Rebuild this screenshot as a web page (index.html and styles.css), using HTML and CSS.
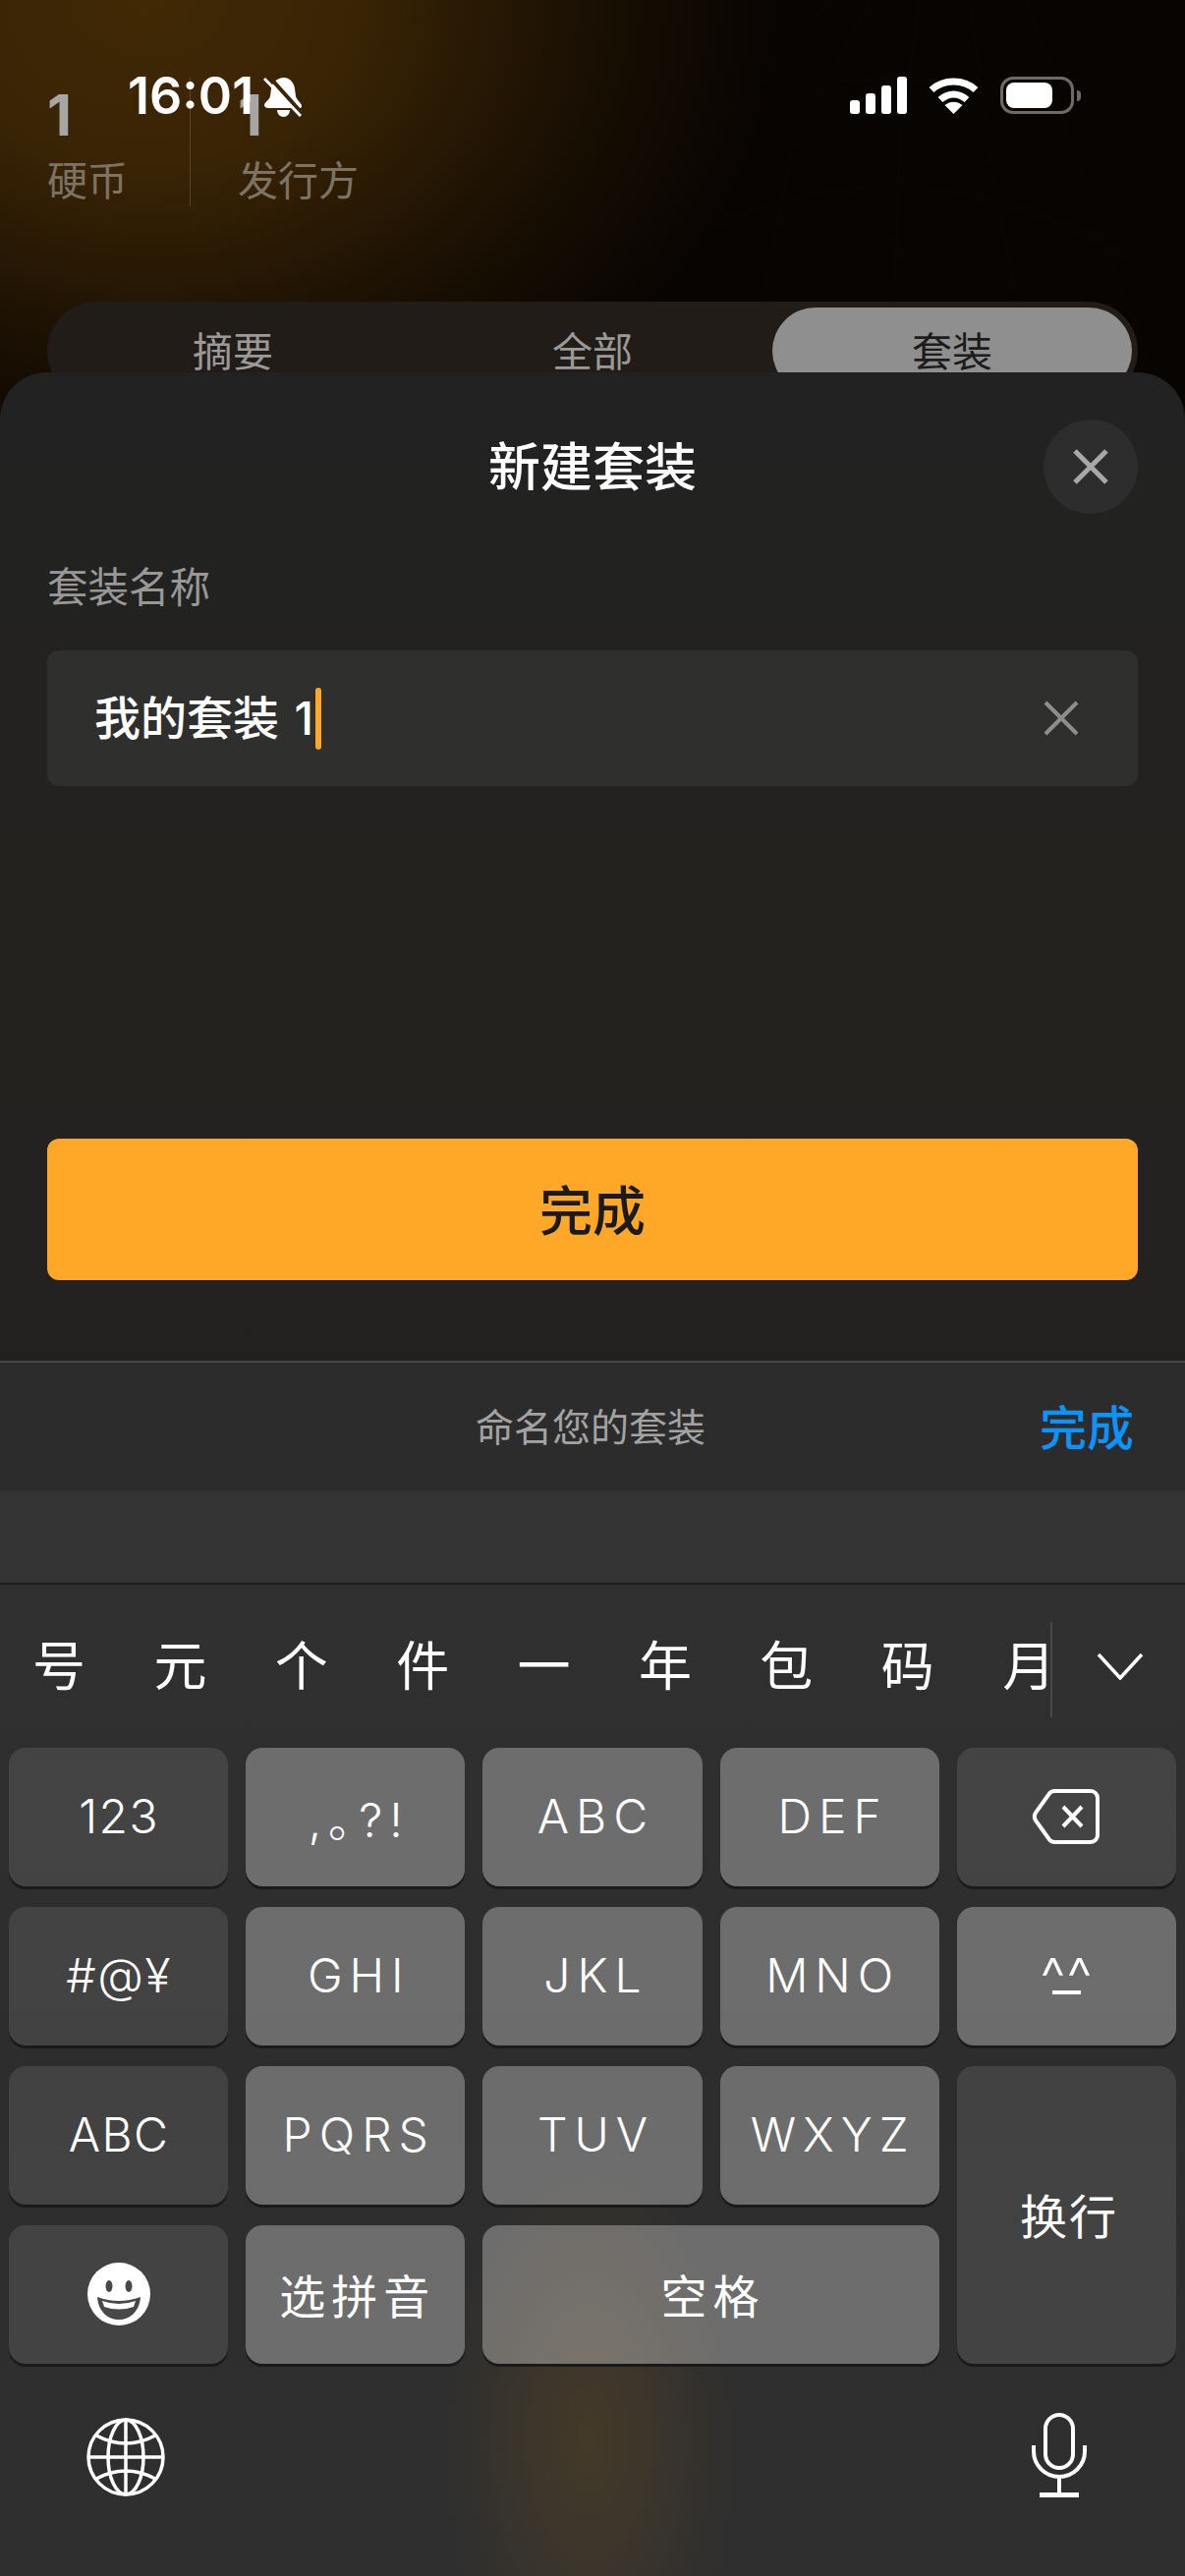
FILE: index.html
```html
<!DOCTYPE html>
<html lang="zh-CN">
<head>
<meta charset="utf-8">
<title>新建套装</title>
<link rel="stylesheet" href="styles.css">
</head>
<body>
<div class="page">
  <section class="backdrop">
    <svg class="web" viewBox="0 0 700 420" width="700" height="420" fill="none" stroke="#fff" stroke-opacity=".012" stroke-width="2">
      <path d="M100 420 200 160 340 0M250 420 300 150 380 0M400 420 410 140 430 0M550 420 500 150 480 0M680 420 590 170 540 0M160 260Q400 120 640 260M220 120Q400 40 600 120"/>
    </svg>
    <div class="stats">
      <div class="stat stat-first"><div class="stat-num">1</div><div class="stat-label">硬币</div></div>
      <div class="stat"><div class="stat-num">1</div><div class="stat-label">发行方</div></div>
    </div>
    <div class="tabs">
      <div class="tab">摘要</div>
      <div class="tab">全部</div>
      <div class="tab tab-on">套装</div>
    </div>
    <div class="status">
      <div class="status-left">
        <span class="time">16:01</span>
        <svg class="bell" viewBox="0 0 40 42" width="40" height="42">
          <path fill="#fff" d="M21 2c6 0 10 5 11 11l1 8c1 4 6 7 6 10 0 2-1 2-3 2H5c-2 0-4-1-4-3 0-3 5-5 6-9l1-8C9 7 14 2 21 2Z"/>
          <path fill="#fff" d="M14 35h13c0 4-3 7-6.500 7S14 39 14 35Z"/>
          <path stroke="#3a2505" stroke-width="4" d="M5 0l34 38"/>
          <path stroke="#fff" stroke-width="3" d="M1 3l37 38"/>
        </svg>
      </div>
      <div class="status-right">
        <svg class="signal" viewBox="0 0 58 38" width="58" height="38" fill="#fff">
          <rect x="0" y="24" width="10" height="14" rx="3"/>
          <rect x="16" y="17" width="10" height="21" rx="3"/>
          <rect x="32" y="9" width="10" height="29" rx="3"/>
          <rect x="48" y="0" width="10" height="38" rx="3"/>
        </svg>
        <svg class="wifi" viewBox="0 0 51 38" width="51" height="38" fill="none" stroke="#fff" stroke-width="7">
          <path d="M3 13.500C15 2 36 2 48 13.500"/>
          <path d="M12 23.500C20 16 31 16 39 23.500"/>
          <path fill="#fff" stroke="none" d="M25.500 38 16.500 29C22 24.500 29 24.500 34.500 29Z"/>
        </svg>
        <div class="battery"><div class="battery-fill"></div></div>
        <div class="battery-nub"></div>
      </div>
    </div>
  </section>

  <section class="sheet">
    <header class="sheet-head">
      <h1 class="sheet-title">新建套装</h1>
      <div class="close">
        <svg viewBox="0 0 36 36" width="36" height="36" fill="none" stroke="#a8a8a8" stroke-width="5"><path d="M2 2l32 32M34 2 2 34"/></svg>
      </div>
    </header>
    <label class="field-label">套装名称</label>
    <div class="field">
      <span class="field-text">我的套装 1</span><span class="caret"></span>
      <svg class="field-clear" viewBox="0 0 36 36" width="36" height="36" fill="none" stroke="#8e8e8e" stroke-width="4"><path d="M2 2l32 32M34 2 2 34"/></svg>
    </div>
    <div class="primary">完成</div>
  </section>

  <section class="accessory">
    <span></span>
    <span class="accessory-hint">命名您的套装</span>
    <span class="accessory-done">完成</span>
  </section>

  <section class="keyboard">
    <div class="kb-top"></div>
    <div class="candidates">
      <div class="cand-list">
        <span>号</span><span>元</span><span>个</span><span>件</span><span>一</span><span>年</span><span>包</span><span>码</span><span>月</span>
      </div>
      <div class="cand-more">
        <svg viewBox="0 0 48 28" width="48" height="28" fill="none" stroke="#fff" stroke-width="3.500"><path d="M2 2l22 24L46 2"/></svg>
      </div>
    </div>
    <div class="keys">
      <div class="key key-dark key-sym">123</div>
      <div class="key key-spaced">,｡?!</div>
      <div class="key key-spaced">ABC</div>
      <div class="key key-spaced">DEF</div>
      <div class="key key-dark">
        <svg viewBox="0 0 70 58" width="70" height="58" fill="none" stroke="#fff" stroke-width="4"><path d="M23 3h37a7 7 0 0 1 7 7v38a7 7 0 0 1-7 7H23a7 7 0 0 1-6-4L4 33a8 8 0 0 1 0-8L17 7a7 7 0 0 1 6-4Z"/><path d="M32 19l19 20M51 19 32 39"/></svg>
      </div>
      <div class="key key-dark key-sym">#@¥</div>
      <div class="key key-spaced">GHI</div>
      <div class="key key-spaced">JKL</div>
      <div class="key key-spaced">MNO</div>
      <div class="key key-face"><span class="face-eyes">^^</span><span class="face-mouth"></span></div>
      <div class="key key-dark key-sym">ABC</div>
      <div class="key key-spaced">PQRS</div>
      <div class="key key-spaced">TUV</div>
      <div class="key key-spaced">WXYZ</div>
      <div class="key key-dark key-return">换行</div>
      <div class="key key-dark">
        <svg viewBox="0 0 64 64" width="64" height="64">
          <circle cx="32" cy="32" r="32" fill="#fff"/>
          <ellipse cx="22" cy="24" rx="3.500" ry="6" fill="#484848"/>
          <ellipse cx="42" cy="24" rx="3.500" ry="6" fill="#484848"/>
          <path fill="#484848" d="M10 35Q32 43 54 35C53 50 43 58 32 58S11 50 10 35Z"/>
          <path fill="#fff" d="M15 39Q32 45 49 39L47 45Q32 50 17 45Z"/>
        </svg>
      </div>
      <div class="key key-cjk">选拼音</div>
      <div class="key key-cjk key-space">空格</div>
    </div>
    <div class="kb-bottom">
      <svg class="globe" viewBox="0 0 80 80" width="80" height="80" fill="none" stroke="#fff" stroke-width="3.500">
        <circle cx="40" cy="40" r="38"/>
        <ellipse cx="40" cy="40" rx="18" ry="38"/>
        <path d="M40 2v76M2 40h76M10 18Q40 34 70 18M10 62Q40 46 70 62"/>
      </svg>
      <svg viewBox="0 0 56 86" width="56" height="86" fill="none" stroke="#fff" stroke-width="4">
        <rect x="14" y="2" width="28" height="54" rx="14"/>
        <path d="M2 33v6a26 26 0 0 0 52 0v-6M28 65v18"/>
        <path stroke-width="5" d="M8 83.500h40"/>
      </svg>
    </div>
  </section>
</div>
</body>
</html>
```
FILE: styles.css
```css
* { box-sizing: border-box; }
html, body { margin: 0; padding: 0; }
body {
  width: 1206px;
  height: 2622px;
  overflow: hidden;
  background: #000;
  font-family: Inter, "Noto Sans CJK SC", sans-serif;
  color: #fff;
}
.page { position: relative; width: 1206px; height: 2622px; display: flex; flex-direction: column; overflow: hidden; }

/* behind the sheet */
.backdrop {
  position: relative;
  flex: none;
  height: 427px;
  padding: 79px 48px 0;
  background:
    radial-gradient(ellipse 640px 520px at 150px 0, #412905 0%, #382305 34%, #1a1003 70%, #080402 100%),
    #060302;
  overflow: hidden;
}
.web { position: absolute; right: 0; top: 0; }
.stats { position: relative; display: flex; height: 131px; }
.stat { padding-top: 14px; }
.stat-first { width: 146px; border-right: 1px solid rgba(255, 255, 255, .16); margin-right: 48px; }
.stat-num { font-size: 58px; line-height: 48px; font-weight: 700; color: #a7a6a4; height: 48px; }
.stat-label { margin-top: 20px; font-size: 41px; line-height: 40px; color: #7d7365; font-family: "Noto Sans CJK SC", sans-serif; }
.tabs {
  position: relative;
  display: grid;
  grid-template-columns: repeat(3, 1fr);
  margin-top: 97px;
  height: 100px;
  padding: 6px;
  border-radius: 50px;
  background: #211c18;
}
.tab {
  display: flex;
  align-items: center;
  justify-content: center;
  padding-bottom: 4px;
  font-size: 41px;
  color: #9a9997;
  border-radius: 44px;
}
.tab-on { background: #8f8f8f; color: #1c1c1c; }

.status {
  position: absolute;
  left: 0;
  right: 0;
  top: 0;
  height: 160px;
  display: flex;
  justify-content: space-between;
}
.status-left { display: flex; align-items: flex-start; gap: 10px; padding: 70px 0 0 130px; }
.time { font-size: 52px; line-height: 56px; font-weight: 600; }
.bell { margin-top: 7px; }
.status-right { display: flex; align-items: flex-start; padding: 78px 106px 0 0; }
.signal { margin-right: 22px; }
.wifi { margin-right: 22px; }
.battery { width: 75px; height: 38px; border: 3px solid #6d6a68; border-radius: 13px; padding: 3px; }
.battery-fill { width: 47px; height: 26px; background: #fff; border-radius: 8px; }
.battery-nub { width: 4px; height: 11px; margin: 14px 0 0 3px; background: #6d6a68; border-radius: 0 4px 4px 0; }

/* sheet */
.sheet {
  position: relative;
  flex: none;
  height: 1006px;
  margin-top: -48px;
  padding: 48px 48px 0;
  border-radius: 48px 48px 0 0;
  background: linear-gradient(#222222, #23221f 60%, #222120);
}
.sheet-head { position: relative; height: 96px; display: flex; align-items: center; justify-content: center; }
.sheet-title { margin: 0; padding-top: 2px; font-size: 53px; line-height: 94px; font-weight: 500; }
.close {
  position: absolute;
  right: 0;
  top: 0;
  width: 96px;
  height: 96px;
  border-radius: 50%;
  background: #2d2d2d;
  display: flex;
  align-items: center;
  justify-content: center;
}
.field-label { display: block; margin-top: 54px; font-size: 41.500px; line-height: 42px; color: #989898; }
.field {
  display: flex;
  align-items: center;
  height: 138px;
  margin-top: 43px;
  padding: 0 60px 0 48px;
  border-radius: 12px;
  background: #2f2f2e;
}
.field-text { font-size: 47px; line-height: 60px; white-space: pre; font-weight: 500; word-spacing: 3px; }
.caret { width: 6px; height: 63px; margin-left: 2px; border-radius: 3px; background: #ffa726; }
.field-clear { margin-left: auto; }
.primary {
  height: 144px;
  margin-top: 359px;
  padding-bottom: 3px;
  border-radius: 12px;
  background: #ffa726;
  display: flex;
  align-items: center;
  justify-content: center;
  font-size: 54px;
  font-weight: 500;
  color: #1a1a1a;
}

/* accessory */
.accessory {
  flex: none;
  height: 133px;
  display: grid;
  grid-template-columns: 1fr auto 1fr;
  align-items: center;
  padding: 0 52px 6px 48px;
  border-top: 2px solid #454545;
  background: #2c2c2c;
}
.accessory-hint { font-size: 39px; color: #a3a3a3; }
.accessory-done { justify-self: end; font-size: 48px; font-weight: 500; color: #0a94ff; }

/* keyboard */
.keyboard {
  flex: 1;
  display: flex;
  flex-direction: column;
  background:
    radial-gradient(ellipse 150px 290px at 600px 2480px, rgba(110, 80, 30, .34), rgba(110, 80, 30, 0) 100%),
    linear-gradient(#303030 1600px, #2d2d2d 2100px, #2f2f2f);
  background-attachment: fixed;
}
.kb-top { height: 95px; border-bottom: 2px solid #1c1c1c; flex: none; background: #333; }
.candidates { flex: none; display: flex; align-items: center; height: 166px; position: relative; padding-top: 2px; }
.cand-list { flex: none; width: 1069px; display: flex; gap: 69.4px; padding-left: 33px; white-space: nowrap; }
.cand-list span { flex: none; width: 54px; font-size: 54px; line-height: 60px; text-align: center; }
.cand-more {
  position: absolute;
  left: 1069px;
  top: 38px;
  width: 137px;
  height: 97px;
  padding: 0 0 8px 45px;
  border-left: 2px solid #484848;
  display: flex;
  align-items: center;
}
.keys {
  flex: none;
  display: grid;
  grid-template-columns: repeat(5, 1fr);
  grid-auto-rows: 141px;
  gap: 21px 18px;
  padding: 0 9px;
}
.key {
  display: flex;
  align-items: center;
  justify-content: center;
  padding-bottom: 2px;
  border-radius: 17px;
  background: rgba(255, 255, 255, .3);
  box-shadow: 0 3px 0 #1a1a1a;
  font-size: 48px;
  font-weight: 300;
}
.key-dark { background: rgba(255, 255, 255, .1); }
.key-sym { letter-spacing: 1.500px; padding-left: 1px; }
.key-spaced { letter-spacing: 7px; padding-left: 7px; }
.key-cjk { font-size: 47px; letter-spacing: 6px; padding-left: 4px; font-weight: 400; }
.key-face { flex-direction: column; padding: 5px 0 0; }
.face-eyes { font-size: 58px; line-height: 30px; height: 28px; letter-spacing: 1px; }
.face-mouth { width: 29px; height: 4px; background: #fff; }
.key-return { grid-column: 5; grid-row: 3 / span 2; font-weight: 400; letter-spacing: 2px; padding: 0 0 4px 5px; }
.key-space { grid-column: span 2; }
.kb-bottom {
  flex: 1;
  display: flex;
  justify-content: space-between;
  align-items: flex-start;
  padding: 50px 100px 0 88px;
}
.globe { margin-top: 5px; }
```
